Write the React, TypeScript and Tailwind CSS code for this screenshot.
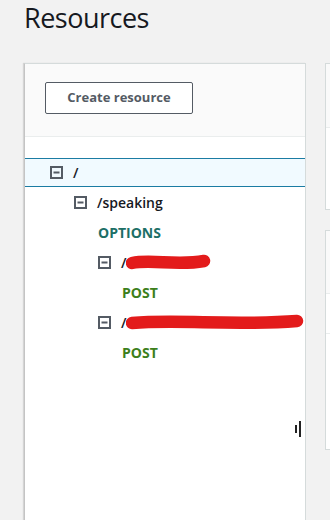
import React from "react"

function MinusBox() {
  return (
    <svg width="13" height="13" viewBox="0 0 13 13" className="shrink-0">
      <rect x="1" y="1" width="11" height="11" fill="none" stroke="#545b64" strokeWidth="2" />
      <rect x="3.5" y="5.5" width="6" height="2" fill="#545b64" />
    </svg>
  )
}

function Scribble({ width }: { width: number }) {
  return (
    <svg width={width} height="18" viewBox={`0 0 ${width} 18`} className="shrink-0">
      <path
        d={`M6 10 C ${width * 0.3} 6, ${width * 0.6} 13, ${width - 7} 8`}
        stroke="#e31b1b"
        strokeWidth="12.5"
        strokeLinecap="round"
        fill="none"
      />
    </svg>
  )
}

export default function App() {
  return (
    <div className="h-[520px] w-[330px] overflow-hidden bg-[#f2f2f2] font-['Open_Sans',sans-serif]">
      {/* Title */}
      <h1 className="pl-[24px] pt-[1px] text-[27px] leading-[34px] tracking-[-0.5px] text-[#16191f]">Resources</h1>

      <div className="mt-[28px] flex gap-[19px]">
        {/* Resource tree panel */}
        <div className="ml-[24px] h-[470px] w-[282px] shrink-0 border border-[#d5dbdb] border-l-[#c4c4c4] bg-white shadow-[-1px_0_1px_rgba(0,0,0,0.12)]">
          <div className="h-[73px] border-b border-[#eaeded] bg-[#fafafa] pl-[20px] pt-[18px]">
            <button className="h-[32px] w-[148px] rounded-[2px] border border-[#545b64] bg-white text-[13px] font-bold text-[#545b64]">
              Create resource
            </button>
          </div>

          <div className="pt-[21px] text-[14px] text-[#16191f]">
            <div className="flex h-[29px] items-center gap-[10px] border-y border-[#1b7ca3] bg-[#f1faff] pl-[25px]">
              <MinusBox />
              <span className="font-semibold">/</span>
            </div>
            <div className="flex h-[30px] items-center gap-[10px] pl-[49px]">
              <MinusBox />
              <span className="font-semibold">/speaking</span>
            </div>
            <div className="flex h-[30px] items-center pl-[73px] font-bold text-[#1d6f66]">OPTIONS</div>
            <div className="flex h-[30px] items-center gap-[10px] pl-[73px]">
              <MinusBox />
              <span className="flex items-center">
                <span className="font-semibold">/</span>
                <Scribble width={85} />
              </span>
            </div>
            <div className="flex h-[30px] items-center pl-[97px] font-bold text-[#3d7f1c]">POST</div>
            <div className="flex h-[30px] items-center gap-[10px] pl-[73px]">
              <MinusBox />
              <span className="flex items-center">
                <span className="font-semibold">/</span>
                <Scribble width={178} />
              </span>
            </div>
            <div className="flex h-[30px] items-center pl-[97px] font-bold text-[#3d7f1c]">POST</div>

            <div className="flex justify-end pr-[4px] pt-[54px]">
              <div className="flex items-center gap-[2px]">
                <div className="h-[8px] w-[2px] bg-[#222]" />
                <div className="h-[16px] w-[2px] bg-[#222]" />
              </div>
            </div>
          </div>
        </div>

        {/* Detail panels */}
        <div className="flex flex-col gap-[20px]">
          <div className="h-[147px] w-[200px] border border-[#d5dbdb] bg-white">
            <div className="h-[64px] border-b border-[#eaeded] bg-[#fafafa]" />
          </div>
          <div className="h-[220px] w-[200px] border border-[#d5dbdb] bg-white">
            <div className="h-[63px] border-b border-[#eaeded] bg-[#fafafa]" />
            <div className="h-[40px] border-b border-[#eaeded]" />
          </div>
        </div>
      </div>
    </div>
  )
}
